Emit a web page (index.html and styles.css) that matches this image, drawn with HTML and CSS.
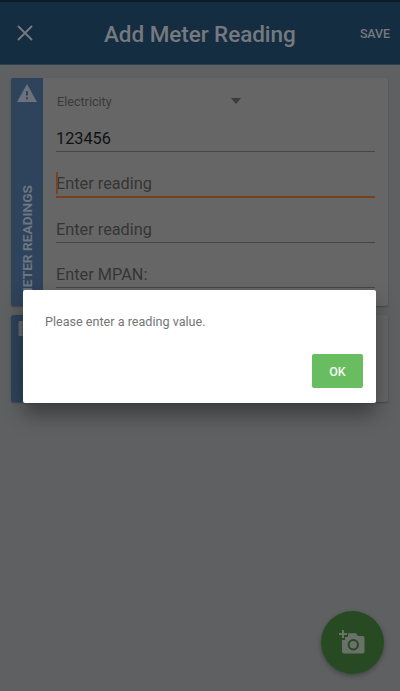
FILE: index.html
```
<!DOCTYPE html>
<html lang="en">
<head>
<meta charset="utf-8">
<title>Add Meter Reading</title>
<link rel="stylesheet" href="styles.css">
</head>
<body>
<div class="screen">
  <div class="status"></div>
  <header class="bar">
    <svg class="close" viewBox="0 0 16 16"><path d="M1 1 15 15M15 1 1 15"/></svg>
    <h1>Add Meter Reading</h1>
    <span class="save">SAVE</span>
  </header>
  <main>
    <section class="card readings">
      <div class="rail">
        <svg class="warn" viewBox="0 0 20 18"><path fill-rule="evenodd" d="M10 0 20 18H0ZM9 7v4.5h2V7ZM9 13.3v2h2v-2Z"/></svg>
        <span class="label">METER READINGS</span>
      </div>
      <div class="fields">
        <div class="select"><span>Electricity</span><i class="arrow"></i></div>
        <div class="field value">123456</div>
        <div class="field active">Enter reading</div>
        <div class="field">Enter reading</div>
        <div class="field">Enter MPAN:</div>
      </div>
    </section>
    <section class="card photos">
      <div class="rail">
        <svg class="image" viewBox="0 0 18 15"><path fill-rule="evenodd" d="M1 0h16a1 1 0 0 1 1 1v13a1 1 0 0 1-1 1H1a1 1 0 0 1-1-1V1a1 1 0 0 1 1-1ZM4 3v2h10V3ZM4 7v2h10V7ZM4 11v2h10v-2Z"/></svg>
        <span class="label">PHOTOS</span>
      </div>
    </section>
  </main>
  <div class="fab">
    <svg viewBox="0 0 26 24"><path fill-rule="evenodd" d="M3 0h2v3h3v2H5v3H3V5H0V3h3ZM9 7V3.2h8L19 6h4.500a2 2 0 0 1 2 2v13.500a2 2 0 0 1-2 2H5a2 2 0 0 1-2-2V10h3V7ZM14.300 9a5.700 5.700 0 1 0 0 11.400 5.700 5.700 0 0 0 0-11.400Z"/><circle cx="14.300" cy="14.700" r="3.700"/></svg>
  </div>
  <div class="dialog">
    <p>Please enter a reading value.</p>
    <button>OK</button>
  </div>
</div>
</body>
</html>
```
FILE: styles.css
```
* { box-sizing: border-box; }
body { margin: 0; font-family: Roboto, sans-serif; }
.screen { position: relative; width: 400px; height: 691px; background: #5e6062; overflow: hidden; }
.status { height: 2px; background: #0b1c2a; }
.bar { height: 63px; background: #152d40; border-bottom: 1px solid #294150; display: flex; align-items: center; color: #757980; padding: 0 10px 0 17px; }
.close { width: 16px; height: 16px; fill: none; stroke: #777b80; stroke-width: 1.8; }
h1 { flex: 1; margin: 1px 0 0 71px; font-size: 22.500px; line-height: 28px; font-weight: 500; white-space: nowrap; letter-spacing: -.06px; }
.save { font-size: 12.500px; font-weight: 500; letter-spacing: -.1px; }
main { padding: 13px 12px 0 11px; display: flex; flex-direction: column; gap: 9px; }
.card { display: flex; background: #666; border-radius: 2px; box-shadow: 0 1px 2px rgba(0,0,0,.28); overflow: hidden; }
.readings { height: 228px; }
.photos { height: 87px; }
.rail { width: 32px; background: #2e435c; display: flex; flex-direction: column; align-items: center; justify-content: space-between; fill: #6c727a; color: #6c7580; }
.warn { width: 20px; height: 18px; margin-top: 6px; }
.image { width: 19px; height: 15px; margin-top: 6px; fill: #656b70; }
.label { writing-mode: vertical-rl; transform: rotate(180deg); font-size: 13.700px; line-height: 16px; font-weight: 700; white-space: nowrap; margin-bottom: 7px; }
.fields { flex: 1; padding: 8px 13px 0 13px; }
.select { height: 30px; width: 186px; padding: 0 1px; display: flex; align-items: center; justify-content: space-between; color: #3a3a3a; font-size: 12.600px; }
.arrow { border: 5.500px solid transparent; border-top: 6px solid #3b3b3b; border-bottom: 0; }
.field { height: 45px; padding: 0 0 2px; border-bottom: 1px solid #464646; display: flex; align-items: flex-end; font-size: 16.300px; line-height: 20px; color: #353535; }
.value { height: 36px; color: #111; }
.active { position: relative; height: 46px; padding-bottom: 2px; border-bottom: 2px solid #75401f; }
.active::before { content: ""; position: absolute; left: 0; bottom: 2px; width: 2px; height: 22px; background: #7a4220; }
.fab { position: absolute; left: 321px; top: 611px; width: 63px; height: 63px; border-radius: 50%; background: #284a23; box-shadow: 0 2px 5px rgba(0,0,0,.3); }
.fab svg { display: block; width: 26px; height: 24px; margin: 19px 0 0 18px; fill: #697169; }
.dialog { position: absolute; left: 23px; top: 290px; width: 353px; height: 113px; background: #fff; border-radius: 2px; box-shadow: 0 11px 20px rgba(0,0,0,.38); padding: 24px 13px 15px 22px; display: flex; flex-direction: column; justify-content: space-between; }
.dialog p { margin: 0; font-size: 12.600px; line-height: 16px; color: #757575; }
.dialog button { align-self: flex-end; width: 51px; height: 34px; border: 0; border-radius: 2px; background: #69bd61; color: #f4faf3; font: 500 12.500px Roboto, sans-serif; }
```
